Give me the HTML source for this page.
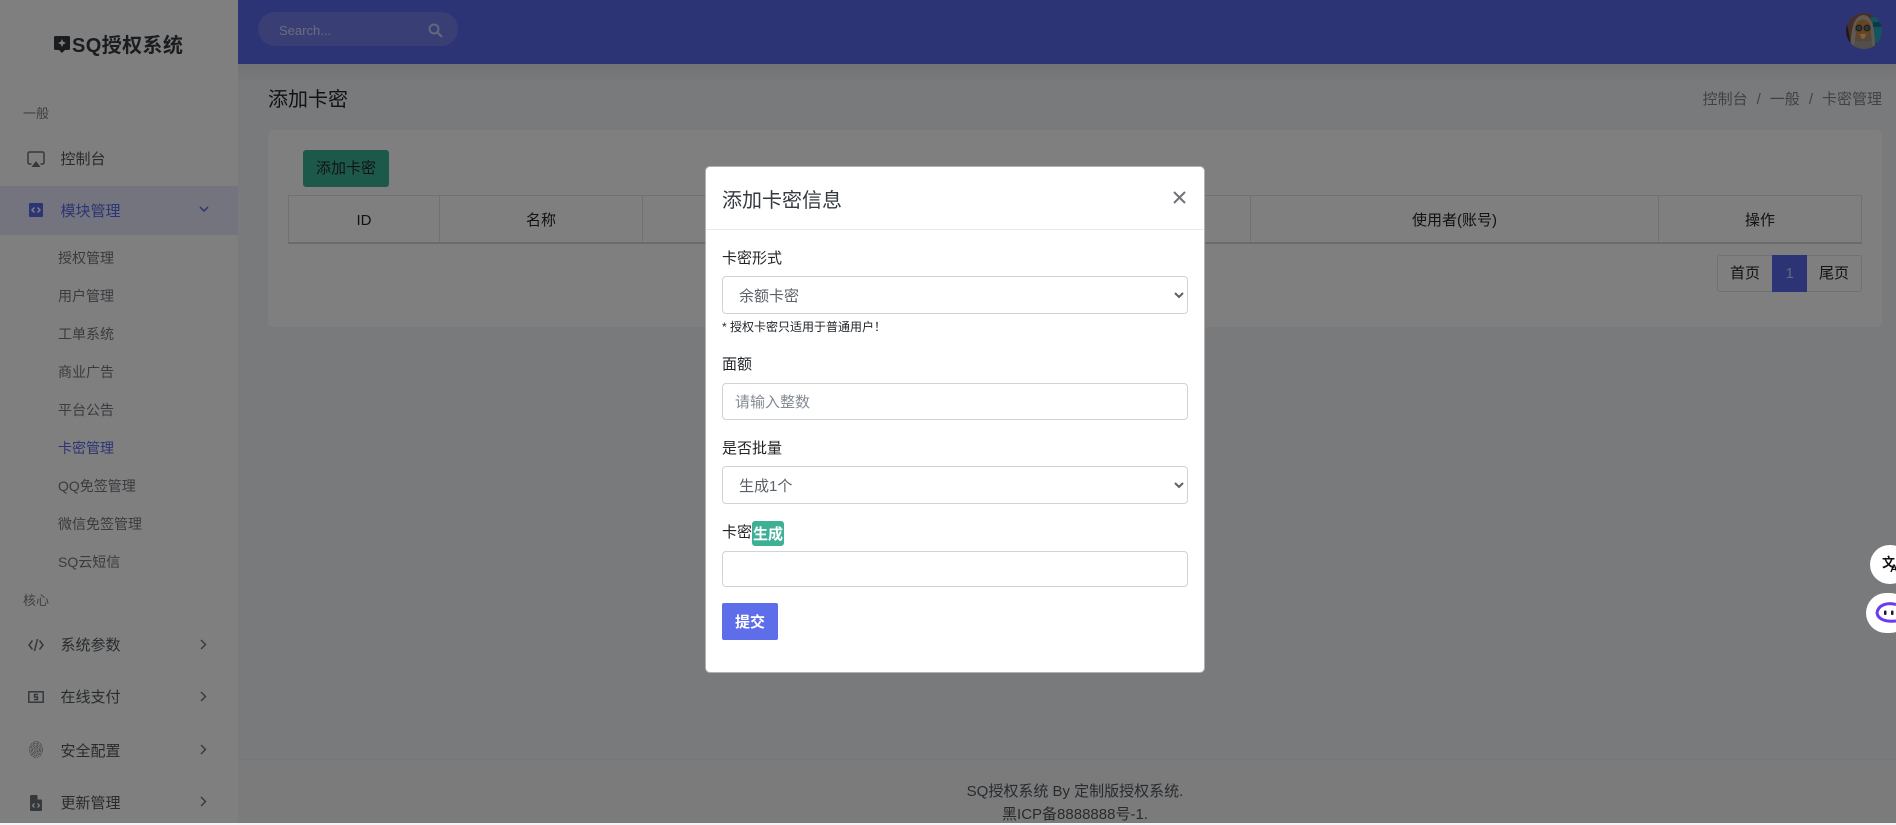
<!DOCTYPE html>
<html lang="zh-CN"><head><meta charset="utf-8"><title>添加卡密</title>
<style>
*{box-sizing:border-box}
html,body{margin:0;padding:0;width:1896px;height:823px;overflow:hidden;background:#f3f4f7;font-family:"Liberation Sans","Noto Sans CJK SC",sans-serif;font-size:15px;color:#212529}
.a{position:absolute;white-space:nowrap;line-height:20px}
svg{position:absolute;display:block}
#side{position:absolute;left:0;top:0;width:238px;height:823px;background:#fff}
#top{position:absolute;left:238px;top:0;width:1658px;height:64px;background:#5a68ea}
#shade{position:absolute;left:238px;top:64px;width:1658px;height:18px;background:linear-gradient(#e6e7ea,#f3f4f7)}
#foot{position:absolute;left:238px;top:759px;width:1658px;height:64px;background:#f6f7f9;border-top:1px solid #eceef0}
.sec{font-size:13px;color:#7a7f85;left:23px}
.mi{left:60.500px;color:#50565c;font-size:15px}
.si{left:58px;color:#72777d;font-size:14px}
.th{top:211px;text-align:center;font-size:15px;color:#212529}
.v{position:absolute;top:195px;height:48px;width:1px;background:#dee2e6}
#ov{position:absolute;left:0;top:0;width:1896px;height:823px;background:rgba(0,0,0,.5)}
#modal{position:absolute;left:705px;top:166px;width:500px;height:507px;background:#fff;border:1px solid rgba(0,0,0,.3);border-radius:5px}
.l{left:722px;font-size:15px;color:#212529}
.ctl{position:absolute;left:722px;width:466px;background:#fff;border:1px solid #ced4da;border-radius:4px;font:15px "Liberation Sans","Noto Sans CJK SC",sans-serif;color:#5a6168;padding:7px 12px 5px;margin:0;outline:0}
input.ctl::placeholder{color:#858c94;opacity:1}
</style></head><body>
<div id="side"></div>
<div id="top"></div><div id="shade"></div>

<svg style="left:54px;top:36px" width="16" height="17" viewBox="0 0 16 17"><path d="M1.500 0h13A1.500 1.500 0 0 1 16 1.500v11a1.500 1.500 0 0 1-1.500 1.500H11l-3 3-3-3H1.500A1.500 1.500 0 0 1 0 12.500v-11A1.500 1.500 0 0 1 1.500 0z" fill="#343a40"/><path d="M8 3l1.200 2.800L12 7l-2.800 1.200L8 11 6.800 8.200 4 7l2.800-1.200z" fill="#fff"/></svg>
<div class="a" style="left:72px;top:36px;font-size:20px;font-weight:700;color:#343a40;letter-spacing:.4px">SQ授权系统</div>

<div class="a sec" style="top:104px">一般</div>
<svg style="left:27px;top:151px" width="18" height="17" viewBox="0 0 18 17" fill="none"><path d="M4.500 13H2.500A1.500 1.500 0 0 1 1 11.500v-9A1.500 1.500 0 0 1 2.500 1h13A1.500 1.500 0 0 1 17 2.500v9a1.500 1.500 0 0 1-1.500 1.500h-2" stroke="#6a7076" stroke-width="1.500"/><path d="M9 10l4.500 6h-9z" fill="#6a7076"/></svg>
<div class="a mi" style="top:150px">控制台</div>

<div style="position:absolute;left:0;top:186px;width:238px;height:49px;background:#e7e8fb"></div>
<svg style="left:29px;top:203px" width="14" height="14" viewBox="0 0 14 14"><rect width="14" height="14" rx="1" fill="#5a68ea"/><path d="M5.500 4.500L3 7l2.500 2.500M8.500 4.500L11 7 8.500 9.500" fill="none" stroke="#fff" stroke-width="1.500"/></svg>
<div class="a mi" style="top:202px;color:#5a68ea">模块管理</div>
<svg style="left:198px;top:205px" width="12" height="9" viewBox="0 0 12 9"><path d="M2 2l4 4 4-4" fill="none" stroke="#5a68ea" stroke-width="1.500"/></svg>

<div class="a si" style="top:248px">授权管理</div>
<div class="a si" style="top:286px">用户管理</div>
<div class="a si" style="top:324px">工单系统</div>
<div class="a si" style="top:362px">商业广告</div>
<div class="a si" style="top:400px">平台公告</div>
<div class="a si" style="top:438px;color:#5a68ea">卡密管理</div>
<div class="a si" style="top:476px">QQ免签管理</div>
<div class="a si" style="top:514px">微信免签管理</div>
<div class="a si" style="top:552px">SQ云短信</div>

<div class="a sec" style="top:591px">核心</div>

<svg style="left:28px;top:637px" width="16" height="16" viewBox="0 0 16 16"><path d="M4.500 3.500L1 8l3.500 4.500M11.500 3.500L15 8l-3.500 4.500M9.500 2L6.500 14" fill="none" stroke="#6a7076" stroke-width="1.500"/></svg>
<div class="a mi" style="top:636px">系统参数</div>
<svg style="left:199px;top:638px" width="9" height="13" viewBox="0 0 9 13"><path d="M2 2l4.500 4.500L2 11" fill="none" stroke="#6a7076" stroke-width="1.400"/></svg>

<svg style="left:28px;top:690px" width="16" height="14" viewBox="0 0 16 14"><rect x=".8" y="1.800" width="14.400" height="10.400" fill="none" stroke="#6a7076" stroke-width="1.500"/><path d="M10 4.500H6.500v2.500h3v2.500H6" fill="none" stroke="#6a7076" stroke-width="1.400"/></svg>
<div class="a mi" style="top:688px">在线支付</div>
<svg style="left:199px;top:690px" width="9" height="13" viewBox="0 0 9 13"><path d="M2 2l4.500 4.500L2 11" fill="none" stroke="#6a7076" stroke-width="1.400"/></svg>

<svg style="left:29px;top:741px" width="14" height="17" viewBox="0 0 14 17" fill="none" stroke="#7a8086" stroke-width=".7" stroke-dasharray="3 .8"><ellipse cx="7" cy="8.500" rx="6.400" ry="7.900"/><ellipse cx="7" cy="8.500" rx="4.900" ry="6.300"/><ellipse cx="7" cy="8.500" rx="3.400" ry="4.700"/><ellipse cx="7" cy="8.500" rx="1.900" ry="3.100"/><path d="M7 6.500v4.500"/></svg>
<div class="a mi" style="top:742px">安全配置</div>
<svg style="left:199px;top:743px" width="9" height="13" viewBox="0 0 9 13"><path d="M2 2l4.500 4.500L2 11" fill="none" stroke="#6a7076" stroke-width="1.400"/></svg>

<svg style="left:30px;top:795px" width="12" height="16" viewBox="0 0 12 16"><path d="M1.500 0H7l5 5v9.500a1.500 1.500 0 0 1-1.500 1.500h-9A1.500 1.500 0 0 1 0 14.500v-13A1.500 1.500 0 0 1 1.500 0z" fill="#6a7076"/><path d="M7.500 0v4.500H12z" fill="#fff"/><path d="M4.500 8.500L2.500 10.500l2 2M7.500 8.500l2 2-2 2" fill="none" stroke="#fff" stroke-width="1.300"/></svg>
<div class="a mi" style="top:794px">更新管理</div>
<svg style="left:199px;top:795px" width="9" height="13" viewBox="0 0 9 13"><path d="M2 2l4.500 4.500L2 11" fill="none" stroke="#6a7076" stroke-width="1.400"/></svg>

<div style="position:absolute;left:258px;top:12px;width:200px;height:34px;border-radius:17px;background:#727deb"></div>
<div class="a" style="left:279px;top:21px;font-size:13px;color:#d6d9fa">Search...</div>
<svg style="left:428px;top:23px" width="15" height="15" viewBox="0 0 15 15"><circle cx="6" cy="6" r="4.500" fill="none" stroke="#c9cdf7" stroke-width="2"/><path d="M9.500 9.500L14 14" stroke="#c9cdf7" stroke-width="2.200"/></svg>

<svg style="left:1846px;top:13px" width="36" height="36" viewBox="0 0 36 36"><defs><clipPath id="c"><circle cx="18" cy="18" r="18"/></clipPath></defs><g clip-path="url(#c)"><rect width="36" height="36" fill="#8a5f5a"/><rect x="25" y="4" width="11" height="26" fill="#26a8bd"/><rect x="27" y="9" width="9" height="5" fill="#1a7488"/><path d="M4 36C5 18 7 3 17 2c9 0 12 12 12 34z" fill="#bfb3a8"/><path d="M8 36C9 24 11 8 17 7c7 0 9 14 9 29z" fill="#a88c76"/><ellipse cx="17" cy="16" rx="8" ry="9.500" fill="#d08840"/><circle cx="13" cy="15" r="3" fill="#4f6c72" stroke="#2a2a2a" stroke-width=".8"/><circle cx="21" cy="15" r="3" fill="#4f6c72" stroke="#2a2a2a" stroke-width=".8"/><path d="M14 21h6l-1.500 4.500h-3z" fill="#efcb9a"/><path d="M9 28h17v8H9z" fill="#a49c98"/><path d="M0 6C2 16 4 26 6 36H0z" fill="#4a2a2a"/></g></svg>

<div class="a" style="left:268px;top:90px;font-size:20px;color:#212529">添加卡密</div>
<div class="a" style="right:14px;top:90px;font-size:15px;color:#80858a"><span>控制台</span><span style="margin:0 9px">/</span><span>一般</span><span style="margin:0 9px">/</span><span>卡密管理</span></div>

<div style="position:absolute;left:268px;top:130px;width:1614px;height:197px;background:#fff;border-radius:5px"></div>
<div style="position:absolute;left:303px;top:150px;width:86px;height:37px;background:#3ab394;border-radius:3px"></div>
<div class="a" style="left:316px;top:159px;font-size:15px;color:#212529">添加卡密</div>

<div style="position:absolute;left:288px;top:195px;width:1574px;height:49px;border:1px solid #dee2e6;border-bottom:2px solid #d3d6da"></div>
<div class="v" style="left:439px"></div><div class="v" style="left:642px"></div><div class="v" style="left:1250px"></div><div class="v" style="left:1658px"></div>
<div class="a th" style="left:289px;width:150px">ID</div>
<div class="a th" style="left:440px;width:202px">名称</div>
<div class="a th" style="left:1251px;width:407px">使用者(账号)</div>
<div class="a th" style="left:1659px;width:202px">操作</div>

<div style="position:absolute;left:1717px;top:255px;width:145px;height:37px;border:1px solid #dee2e6;border-radius:3px"></div>
<div style="position:absolute;left:1772px;top:255px;width:35px;height:37px;background:#5a68ea"></div>
<div class="a" style="left:1730px;top:264px;font-size:15px">首页</div>
<div class="a" style="left:1785.500px;top:264px;font-size:15px;color:#c9cdf7">1</div>
<div class="a" style="left:1819px;top:264px;font-size:15px">尾页</div>

<div id="foot"></div>
<div class="a" style="left:238px;width:1674px;top:782px;text-align:center;font-size:15px;color:#50565c">SQ授权系统 By 定制版授权系统.</div>
<div class="a" style="left:238px;width:1674px;top:805px;text-align:center;font-size:15px;color:#50565c">黑ICP备8888888号-1.</div>

<div id="ov"></div>

<div id="modal"></div>
<div class="a" style="left:722px;top:191px;font-size:20px;color:#343a40">添加卡密信息</div>
<svg style="left:1172.500px;top:190.500px" width="13" height="13" viewBox="0 0 13 13"><path d="M1 1l11 11M12 1L1 12" stroke="#6f7276" stroke-width="2"/></svg>
<div style="position:absolute;left:706px;top:229px;width:498px;height:1px;background:#e9ecef"></div>

<div class="a l" style="top:249px">卡密形式</div>
<select class="ctl" style="top:276px;height:38px"><option>余额卡密</option></select>
<div class="a" style="left:722px;top:317px;font-size:12px;color:#212529">* 授权卡密只适用于普通用户！</div>

<div class="a l" style="top:355px">面额</div>
<input class="ctl" style="top:383px;height:37px" placeholder="请输入整数">

<div class="a l" style="top:439px">是否批量</div>
<select class="ctl" style="top:466px;height:38px"><option>生成1个</option></select>

<div class="a l" style="top:523px">卡密</div>
<div style="position:absolute;left:752px;top:521px;width:32px;height:25px;background:#3fb096;border-radius:3px"></div>
<div class="a" style="left:753px;top:525px;font-size:15px;font-weight:700;color:#fff">生成</div>
<input class="ctl" style="top:551px;height:36px">

<div style="position:absolute;left:722px;top:603px;width:56px;height:37px;background:#5e6eea;border-radius:2px"></div>
<div class="a" style="left:735px;top:613px;font-size:15px;font-weight:700;color:#fff">提交</div>

<div style="position:absolute;left:1870px;top:545px;width:40px;height:39px;border-radius:20px;background:#fff"></div>
<div class="a" style="left:1882px;top:556px;font-size:13px;font-weight:700;color:#111;line-height:14px">文</div>
<div class="a" style="left:1890px;top:563px;font-size:11px;font-weight:700;color:#111;line-height:12px">A</div>
<div style="position:absolute;left:1866px;top:593px;width:44px;height:40px;border-radius:20px;background:#fff"></div>
<svg style="left:1875px;top:601px" width="21" height="24" viewBox="0 0 21 24"><path d="M21 3.500C12 1 3 4 2 12c1 7 10 9 19 8" fill="none" stroke="#6a3bef" stroke-width="3"/><rect x="9" y="9.500" width="2.500" height="4.500" rx="1" fill="#1a1a2a"/><rect x="16" y="9.500" width="2.500" height="4.500" rx="1" fill="#1a1a2a"/></svg>
</body></html>
